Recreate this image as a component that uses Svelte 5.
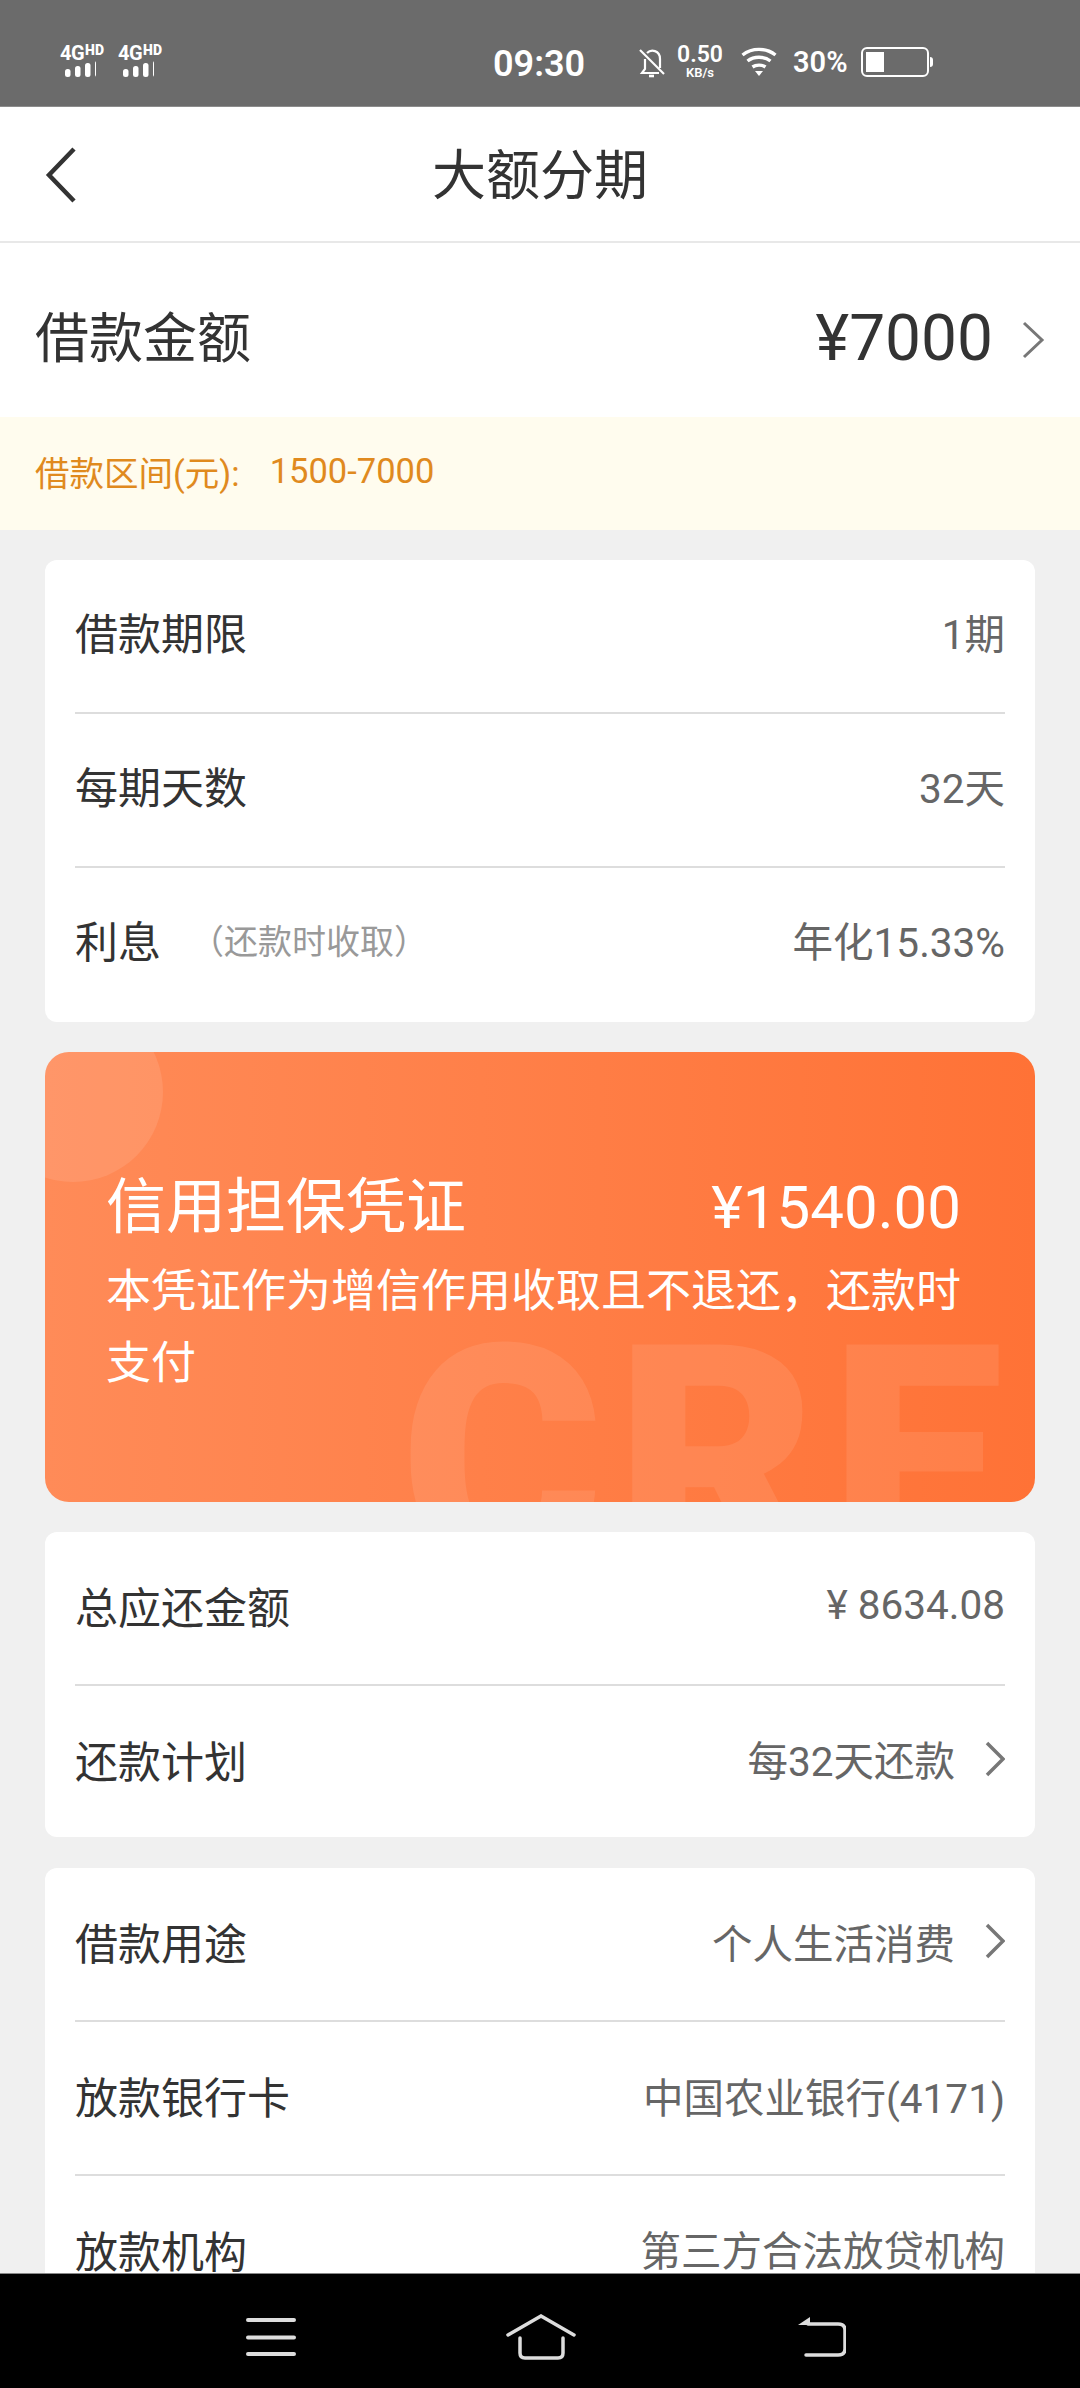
<script>
  const card1 = [
    { label: '借款期限', value: '1期' },
    { label: '每期天数', value: '32天' },
    { label: '利息', note: '（还款时收取）', value: '年化15.33%' }
  ];
  const card2 = [
    { label: '总应还金额', value: '¥ 8634.08' },
    { label: '还款计划', value: '每32天还款', arrow: true }
  ];
  const card3 = [
    { label: '借款用途', value: '个人生活消费', arrow: true },
    { label: '放款银行卡', value: '中国农业银行(4171)' },
    { label: '放款机构', value: '第三方合法放贷机构' }
  ];
  const bars = [[0, 8], [10, 11], [20, 14], [30, 16]];
</script>

{#snippet signal()}
  <div class="signal">
    <div class="net"><span class="g">4G</span><span class="hd">HD</span></div>
    <svg width="36" height="17" viewBox="0 0 36 17">
      {#each bars as [x, h]}
        <rect x={x + 5} y={17 - h} width="5.5" height={h} rx="2.5" fill="#fff" />
      {/each}
    </svg>
  </div>
{/snippet}

{#snippet rows(items, variant)}
  <section class="card {variant}">
    {#each items as item}
      <div class="row">
        <span class="label">{item.label}</span>
        {#if item.note}<span class="note">{item.note}</span>{/if}
        <span class="value">{item.value}</span>
        {#if item.arrow}
          <svg class="chev" width="20" height="36" viewBox="0 0 20 36">
            <path d="M2 2 L18 18 L2 34" fill="none" stroke="#777" stroke-width="3.5" />
          </svg>
        {/if}
      </div>
    {/each}
  </section>
{/snippet}

<div class="phone">
  <header class="status">
    {@render signal()}
    {@render signal()}
    <span class="time">09:30</span>
    <svg class="bell" width="26" height="30" viewBox="0 0 26 30" fill="none" stroke="#fff" stroke-width="2.2">
      <path d="M6 11 V21 L3 25 H20" />
      <path d="M8 5 C12 1 21 2 21 11 V20" />
      <path d="M1 2 L25 26" />
      <path d="M10 28 H15" stroke-width="2.6" />
    </svg>
    <div class="speed"><span class="s1">0.50</span><span class="s2">KB/s</span></div>
    <svg class="wifi" width="36" height="30" viewBox="0 0 36 30" fill="none" stroke="#fff" stroke-width="3.4">
      <path d="M1.5 8 C11 0.5 25 0.5 34.5 8" />
      <path d="M6.5 14 C13 9 23 9 29.5 14" />
      <path d="M11.5 20 C15 17.5 21 17.5 24.5 20" />
      <path d="M14 24 H22 L18 29 Z" fill="#fff" stroke="none" />
    </svg>
    <span class="pct">30%</span>
    <div class="battery"><div class="level"></div></div>
    <div class="tip"></div>
  </header>

  <nav class="topbar">
    <svg class="back" width="32" height="56" viewBox="0 0 32 56">
      <path d="M29 2 L4 28 L29 54" fill="none" stroke="#333" stroke-width="4.5" />
    </svg>
    <h1>大额分期</h1>
  </nav>

  <main class="content">
    <div class="amount">
      <span class="amount-label">借款金额</span>
      <span class="amount-value">¥7000</span>
      <svg class="amount-chev" width="24" height="38" viewBox="0 0 24 38">
        <path d="M3 2 L21 19 L3 36" fill="none" stroke="#777" stroke-width="3" />
      </svg>
    </div>
    <div class="notice"><span>借款区间(元):</span><span class="range">1500-7000</span></div>

    <div class="cards">
      {@render rows(card1, 'first')}

      <section class="promo">
        <div class="circle"></div>
        <div class="mark">CRE</div>
        <div class="promo-head"><span>信用担保凭证</span><span class="fee">¥1540.00</span></div>
        <p>本凭证作为增信作用收取且不退还&#xFF0C;还款时支付</p>
      </section>

      {@render rows(card2, 'second')}
      {@render rows(card3, 'third')}
    </div>
  </main>

  <footer class="sysnav">
    <svg width="50" height="40" viewBox="0 0 50 40" fill="none" stroke="#ddd" stroke-width="4" stroke-linecap="round">
      <path d="M2 3 H48 M2 20.500 H48 M2 37 H48" />
    </svg>
    <svg width="70" height="46" viewBox="0 0 70 46" fill="none" stroke="#ddd" stroke-width="3.500" stroke-linecap="round">
      <path d="M2 21 L35 2 L68 21" />
      <path d="M14 24 V39 Q14 44 19 44 H52 Q57 44 57 39 V24" />
    </svg>
    <svg width="50" height="42" viewBox="0 0 50 42" fill="none" stroke="#ddd" stroke-width="3.500" stroke-linecap="round">
      <path d="M2 10 L14 2 V10 Z" fill="#ddd" stroke="none" />
      <path d="M12 9 H42 Q49 9 49 15 V34 Q49 40 42 40 H10" />
    </svg>
  </footer>
</div>

<style>
  :global(body) { margin: 0; background: #f0f0f0; }
  .phone {
    width: 1080px; height: 2388px; display: flex; flex-direction: column; overflow: hidden;
    font-family: Roboto, "Noto Sans CJK SC", sans-serif; color: #333;
  }
  .status {
    height: 107px; flex: none; box-sizing: border-box; background: #6b6b6b; color: #fff;
    display: flex; align-items: flex-start; padding: 45px 0 0 60px; border-bottom: 1px solid #8c8c8c;
  }
  .signal { width: 58px; display: flex; flex-direction: column; }
  .net { display: flex; align-items: flex-start; height: 16px; line-height: 16px; font-weight: 700; }
  .g { font-size: 20px; letter-spacing: -0.5px; }
  .hd { font-size: 14px; line-height: 11px; margin-left: 1px; font-weight: 900; }
  .signal svg { display: block; margin-top: -1px; }
  .time { margin-left: 317px; font-size: 36px; line-height: 36px; font-weight: 600; width: 94px; margin-top: 1px; }
  .bell { margin: 3px 0 0 52px; }
  .speed { margin-left: 10px; width: 50px; display: flex; flex-direction: column; align-items: center; }
  .s1 { font-size: 23px; line-height: 20px; font-weight: 600; }
  .s2 { font-size: 13px; line-height: 13px; font-weight: 600; margin-top: 1px; }
  .wifi { margin: 2px 0 0 16px; }
  .pct { margin: 0 0 0 16px; font-size: 29px; line-height: 34px; font-weight: 600; width: 55px; }
  .battery {
    margin: 2px 0 0 13px; width: 68px; height: 30px; box-sizing: border-box; border: 2px solid #fff;
    border-radius: 6px; padding: 3px;
  }
  .level { width: 18px; height: 20px; background: #fff; }
  .tip { width: 3px; height: 10px; margin: 12px 0 0 1px; background: #fff; border-radius: 0 3px 3px 0; }

  .topbar {
    height: 136px; flex: none; box-sizing: border-box; background: #fff; position: relative;
    display: flex; align-items: center; justify-content: center; border-bottom: 2px solid #e8e8e8;
  }
  .back { position: absolute; left: 45px; top: 40px; }
  h1 { margin: 0; font-size: 54px; font-weight: 400; color: #333; line-height: 1; transform: translateY(3px); }

  .content { flex: 1; min-height: 0; overflow: hidden; background: #f0f0f0; }
  .amount {
    height: 174px; box-sizing: border-box; padding: 9px 35px 0 35px; background: #fff;
    display: flex; align-items: center;
  }
  .amount-label { font-size: 54px; color: #333; flex: 1; }
  .amount-value { font-size: 64px; color: #333; margin-top: 8px; }
  .amount-chev { margin: 10px 0 0 28px; }
  .notice {
    height: 113px; box-sizing: border-box; background: #fffcee; color: #e08a1e; font-size: 34.5px;
    display: flex; align-items: center; padding: 0 0 5px 35px; gap: 30px;
  }
  .cards { padding: 30px 45px 0; display: flex; flex-direction: column; gap: 30px; }
  .card { background: #fff; border-radius: 12px; padding: 0 30px; }
  .third { margin-top: 1px; }
  .row {
    box-sizing: border-box; height: 154px; padding-bottom: 6px;
    display: flex; align-items: center; border-bottom: 2px solid #ddd;
  }
  .first .row { padding-bottom: 10px; }
  .row:last-child { border-bottom: none; height: 151px; }
  .first .row:last-child { height: 154px; padding-bottom: 12px; }
  .label { font-size: 43px; color: #333; }
  .note { font-size: 34px; color: #999; margin-left: 29px; }
  .value { margin-left: auto; font-size: 40.5px; color: #666; }
  .chev { margin-left: 30px; }

  .promo {
    position: relative; height: 450px; box-sizing: border-box; overflow: hidden; border-radius: 24px;
    padding: 118px 72px 0 61px; color: #fff;
    background: linear-gradient(90deg, #ff8b58, #ff7236);
  }
  .circle {
    position: absolute; left: -62px; top: -50px; width: 180px; height: 180px; border-radius: 50%;
    background: rgba(255, 255, 255, 0.1);
  }
  .mark {
    position: absolute; left: 355px; top: 252px; font-size: 310px; line-height: 1; font-weight: 900;
    color: rgba(255, 255, 255, 0.09); white-space: nowrap; letter-spacing: 12px;
  }
  .promo-head {
    position: relative; display: flex; justify-content: space-between; align-items: center;
    font-size: 60px; line-height: 76px; padding-right: 2px;
  }
  .fee { font-size: 60px; }
  p { position: relative; margin: 10px 0 0; font-size: 45px; line-height: 72px; }

  .sysnav {
    height: 115px; flex: none; box-sizing: border-box; background: #000; border-top: 1px solid #888;
    display: flex; align-items: flex-start; padding-top: 43px; padding-left: 246px;
  }
  .sysnav svg:nth-child(2) { margin: -3px 0 0 210px; }
  .sysnav svg:nth-child(3) { margin: -2px 0 0 220px; }
</style>
